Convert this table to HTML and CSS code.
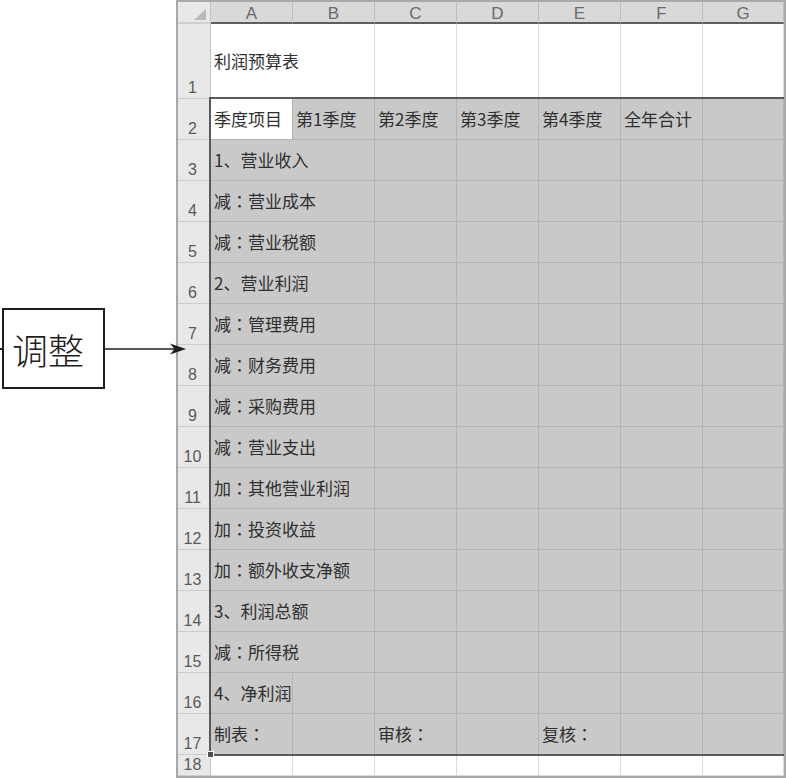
FILE: index.html
```html
<!DOCTYPE html>
<html lang="zh-CN">
<head>
<meta charset="utf-8">
<title>利润预算表</title>
<link rel="stylesheet" href="styles.css">
</head>
<body>
<div class="page">
  <div class="callout">
    <span class="stub"></span>
    <div class="label">调整</div>
    <svg class="arrow" viewBox="0 0 81 14" width="81" height="14">
      <line x1="0" y1="7" x2="72" y2="7" stroke="#1e1e1e" stroke-width="1.6"/>
      <path d="M81 7 L65 1.5 L69.5 7 L65 12.5 Z" fill="#1e1e1e"/>
    </svg>
  </div>
  <div class="sheet">
    <div class="corner"><svg viewBox="0 0 12 11" width="12" height="11"><path d="M12 0 L12 11 L0 11 Z" fill="#b9b9b9"/></svg></div>
    <div class="ch">A</div><div class="ch">B</div><div class="ch">C</div><div class="ch">D</div><div class="ch">E</div><div class="ch">F</div><div class="ch">G</div>

    <div class="rh">1</div>
    <div class="c w nr">利润预算表</div><div class="c w"></div><div class="c w"></div><div class="c w"></div><div class="c w"></div><div class="c w"></div><div class="c w"></div>

    <div class="rh">2</div>
    <div class="c w2">季度项目</div><div class="c">第1季度</div><div class="c">第2季度</div><div class="c">第3季度</div><div class="c">第4季度</div><div class="c">全年合计</div><div class="c"></div>

    <div class="rh">3</div>
    <div class="c nr">1、营业收入</div><div class="c"></div><div class="c"></div><div class="c"></div><div class="c"></div><div class="c"></div><div class="c"></div>

    <div class="rh">4</div>
    <div class="c nr">减<span class="cn" lang="ja">：</span>营业成本</div><div class="c"></div><div class="c"></div><div class="c"></div><div class="c"></div><div class="c"></div><div class="c"></div>

    <div class="rh">5</div>
    <div class="c nr">减<span class="cn" lang="ja">：</span>营业税额</div><div class="c"></div><div class="c"></div><div class="c"></div><div class="c"></div><div class="c"></div><div class="c"></div>

    <div class="rh">6</div>
    <div class="c nr">2、营业利润</div><div class="c"></div><div class="c"></div><div class="c"></div><div class="c"></div><div class="c"></div><div class="c"></div>

    <div class="rh">7</div>
    <div class="c nr">减<span class="cn" lang="ja">：</span>管理费用</div><div class="c"></div><div class="c"></div><div class="c"></div><div class="c"></div><div class="c"></div><div class="c"></div>

    <div class="rh">8</div>
    <div class="c nr">减<span class="cn" lang="ja">：</span>财务费用</div><div class="c"></div><div class="c"></div><div class="c"></div><div class="c"></div><div class="c"></div><div class="c"></div>

    <div class="rh">9</div>
    <div class="c nr">减<span class="cn" lang="ja">：</span>采购费用</div><div class="c"></div><div class="c"></div><div class="c"></div><div class="c"></div><div class="c"></div><div class="c"></div>

    <div class="rh">10</div>
    <div class="c nr">减<span class="cn" lang="ja">：</span>营业支出</div><div class="c"></div><div class="c"></div><div class="c"></div><div class="c"></div><div class="c"></div><div class="c"></div>

    <div class="rh">11</div>
    <div class="c nr">加<span class="cn" lang="ja">：</span>其他营业利润</div><div class="c"></div><div class="c"></div><div class="c"></div><div class="c"></div><div class="c"></div><div class="c"></div>

    <div class="rh">12</div>
    <div class="c nr">加<span class="cn" lang="ja">：</span>投资收益</div><div class="c"></div><div class="c"></div><div class="c"></div><div class="c"></div><div class="c"></div><div class="c"></div>

    <div class="rh">13</div>
    <div class="c nr">加<span class="cn" lang="ja">：</span>额外收支净额</div><div class="c"></div><div class="c"></div><div class="c"></div><div class="c"></div><div class="c"></div><div class="c"></div>

    <div class="rh">14</div>
    <div class="c nr">3、利润总额</div><div class="c"></div><div class="c"></div><div class="c"></div><div class="c"></div><div class="c"></div><div class="c"></div>

    <div class="rh">15</div>
    <div class="c nr">减<span class="cn" lang="ja">：</span>所得税</div><div class="c"></div><div class="c"></div><div class="c"></div><div class="c"></div><div class="c"></div><div class="c"></div>

    <div class="rh">16</div>
    <div class="c">4、净利润</div><div class="c"></div><div class="c"></div><div class="c"></div><div class="c"></div><div class="c"></div><div class="c"></div>

    <div class="rh">17</div>
    <div class="c">制表<span class="cn" lang="ja">：</span></div><div class="c"></div><div class="c">审核<span class="cn" lang="ja">：</span></div><div class="c"></div><div class="c">复核<span class="cn" lang="ja">：</span></div><div class="c"></div><div class="c"></div>

    <div class="rh">18</div>
    <div class="c w"></div><div class="c w"></div><div class="c w"></div><div class="c w"></div><div class="c w"></div><div class="c w"></div><div class="c w"></div>

    <div class="sel"><span class="handle"></span></div>
  </div>
</div>
</body>
</html>
```

FILE: styles.css
```css
html, body {
  margin: 0;
  padding: 0;
  background: #ffffff;
}

.page {
  display: flex;
  align-items: flex-start;
  width: 787px;
  height: 778px;
  overflow: hidden;
}

/* annotation */
.callout {
  flex: 0 0 176px;
  min-width: 0;
  display: flex;
  align-items: center;
  margin-top: 308px;
  position: relative;
  z-index: 5;
}

.stub {
  flex: none;
  width: 2px;
  height: 2px;
  background: #222;
}

.label {
  flex: none;
  box-sizing: border-box;
  width: 103px;
  height: 81px;
  border: 2px solid #1e1e1e;
  padding-left: 8px;
  display: flex;
  align-items: center;
  font-family: "Noto Sans CJK SC", sans-serif;
  font-size: 36px;
  line-height: 1;
  font-weight: 300;
  color: #1e1e1e;
  background: #fff;
}

.arrow {
  flex: none;
  display: block;
}

/* sheet */
.sheet {
  flex: none;
  box-sizing: border-box;
  width: 610px;
  height: 778px;
  border: 2px solid #a9a9a9;
  display: grid;
  grid-template-columns: 33px repeat(6, 82px) 81px;
  grid-template-rows: 22px 75px repeat(16, 41px) 21px;
  background: #fff;
  position: relative;
}

.corner {
  box-sizing: border-box;
  background: #e8e8e8;
  border-right: 1px solid #c4c4c4;
  border-bottom: 2px solid #cfcfcf;
  display: flex;
  align-items: flex-end;
  justify-content: flex-end;
  padding: 0 4px 2px 0;
}

.corner svg {
  display: block;
}

.ch {
  box-sizing: border-box;
  background: #d9d9d9;
  border-right: 1px solid #bdbdbd;
  border-bottom: 2px solid #5e5e5e;
  display: flex;
  align-items: flex-end;
  justify-content: center;
  font-family: "Liberation Sans", Arial, sans-serif;
  font-size: 17px;
  line-height: 17px;
  color: #6a6a6a;
}

.rh {
  box-sizing: border-box;
  background: #e8e8e8;
  border-right: 1px solid #c4c4c4;
  border-bottom: 1px solid #cdcdcd;
  display: flex;
  align-items: flex-end;
  justify-content: center;
  padding: 0 3px 1px 0;
  font-family: "Liberation Sans", Arial, sans-serif;
  font-size: 16px;
  line-height: 18px;
  color: #5a5a5a;
}

.c {
  box-sizing: border-box;
  background: #c9c9c9;
  border-right: 1px solid #b3b3b3;
  border-bottom: 1px solid #b3b3b3;
  display: flex;
  align-items: center;
  padding: 0 0 1px 3px;
  white-space: nowrap;
  font-family: "Noto Sans CJK SC", sans-serif;
  font-size: 17px;
  line-height: 20px;
  color: #303030;
}

.c.w {
  background: #ffffff;
  border-right-color: #dadada;
  border-bottom-color: #dadada;
}

.c.w2 {
  background: #ffffff;
}

.c.nr {
  border-right-color: transparent;
  z-index: 1;
}

.cn {
  font-family: "Noto Sans CJK JP", "Noto Sans CJK SC", sans-serif;
}

.sel {
  position: absolute;
  grid-column: 2 / 9;
  grid-row: 3 / 19;
  top: -2px;
  left: -2px;
  right: 0;
  bottom: -1px;
  border: 2px solid #5a5a5a;
  border-right: none;
  z-index: 2;
  pointer-events: none;
}

.handle {
  position: absolute;
  left: -4px;
  bottom: -4px;
  width: 5px;
  height: 5px;
  background: #505050;
  border: 1px solid #ffffff;
}
```
